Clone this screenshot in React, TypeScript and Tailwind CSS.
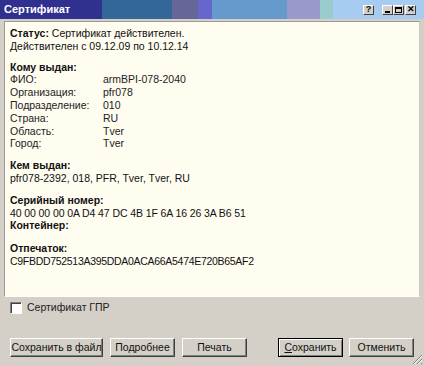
import React from 'react';

const sections = [
  {
    title: 'Кому выдан:',
    rows: [
      ['ФИО:', 'armBPI-078-2040'],
      ['Организация:', 'pfr078'],
      ['Подразделение:', '010'],
      ['Страна:', 'RU'],
      ['Область:', 'Tver'],
      ['Город:', 'Tver'],
    ],
  },
];

const TitleButton = ({ children }: { children: React.ReactNode }) => (
  <div className="w-[11px] h-[10px] bg-[#d4d0c8] border-t border-l border-t-white border-l-white border-b border-r border-b-[#404040] border-r-[#404040] flex items-center justify-center text-[9px] leading-none font-bold text-black">
    {children}
  </div>
);

const Button = ({ children, primary }: { children: React.ReactNode; primary?: boolean }) => (
  <div
    className={`h-[19px] flex items-center justify-center whitespace-nowrap bg-[#d4d0c8] text-[10.5px] text-[#111] ${
      primary
        ? 'border border-black shadow-[inset_1px_1px_0_#fff,inset_-1px_-1px_0_#808080]'
        : 'border border-t-white border-l-white border-b-[#404040] border-r-[#404040] shadow-[inset_-1px_-1px_0_#808080]'
    }`}
  >
    {children}
  </div>
);

export default function App() {
  return (
    <div className="w-[424px] h-[366px] bg-[#d4d0c8] flex flex-col font-['Liberation_Sans',Arial,sans-serif] text-[10.5px] text-black overflow-hidden relative">
      {/* title bar */}
      <div className="h-[19px] flex items-center pl-[4px] pr-[8px] bg-[linear-gradient(to_right,#30318f_0px,#30318f_102px,#336699_102px,#336699_172px,#666699_172px,#666699_198px,#6666cc_198px,#6666cc_212px,#6699cc_212px,#6699cc_287px,#9999cc_287px,#9999cc_320px,#99cccc_320px,#99cccc_333px,#a6ccf2_333px)]">
        <span className="text-white font-bold text-[11px]">Сертификат</span>
        <div className="ml-auto flex items-center">
          <TitleButton>?</TitleButton>
          <div className="w-[8px]" />
          <TitleButton>
            <span className="block w-[5px] h-[2px] bg-black mt-[5px]" />
          </TitleButton>
          <TitleButton>
            <span className="block w-[7px] h-[6px] border border-black border-t-2" />
          </TitleButton>
          <div className="w-[1px]" />
          <TitleButton>✕</TitleButton>
        </div>
      </div>

      {/* content panel */}
      <div className="mx-[4px] mt-[2px] h-[276px] bg-[#fffcf0] border-t border-l border-[#9a9a9a] border-r border-r-[#c8c8c8] border-b border-b-white px-[5px] pt-[5px] leading-[12.8px] text-[#111]">
        <div>
          <b>Статус:</b> Сертификат действителен.
        </div>
        <div>Действителен с 09.12.09 по 10.12.14</div>

        {sections.map((s) => (
          <div key={s.title} className="mt-[8px]">
            <div className="font-bold">{s.title}</div>
            {s.rows.map(([k, v]) => (
              <div key={k} className="flex text-[#222]">
                <span className="w-[93px]">{k}</span>
                <span>{v}</span>
              </div>
            ))}
          </div>
        ))}

        <div className="mt-[9px]">
          <div className="font-bold">Кем выдан:</div>
          <div>pfr078-2392, 018, PFR, Tver, Tver, RU</div>
        </div>

        <div className="mt-[9px]">
          <div className="font-bold">Серийный номер:</div>
          <div className="tracking-[-0.1px]">40 00 00 00 0A D4 47 DC 4B 1F 6A 16 26 3A B6 51</div>
          <div className="font-bold">Контейнер:</div>
        </div>

        <div className="mt-[10px]">
          <div className="font-bold">Отпечаток:</div>
          <div className="tracking-[-0.3px]">C9FBDD752513A395DDA0ACA66A5474E720B65AF2</div>
        </div>
      </div>

      {/* checkbox */}
      <div className="flex items-center mt-[5px] ml-[10px] h-[12px]">
        <div className="w-[12px] h-[12px] bg-white border border-t-[#808080] border-l-[#808080] border-b-white border-r-white shadow-[inset_1px_1px_0_#404040]" />
        <span className="ml-[5px] text-[#222]">Сертификат ГПР</span>
      </div>

      {/* buttons */}
      <div className="flex items-center mt-[24px] px-[10px]">
        <div className="w-[93px]">
          <Button>Сохранить в файл</Button>
        </div>
        <div className="w-[65px] ml-[7px]">
          <Button>Подробнее</Button>
        </div>
        <div className="w-[65px] ml-[7px]">
          <Button>Печать</Button>
        </div>
        <div className="w-[65px] ml-auto">
          <Button primary>
            <span>
              <span className="underline">С</span>охранить
            </span>
          </Button>
        </div>
        <div className="w-[65px] ml-[6px]">
          <Button>Отменить</Button>
        </div>
      </div>

      {/* resize grip */}
      <svg className="absolute right-[1px] bottom-[1px]" width="11" height="11" viewBox="0 0 11 11">
        <path d="M10 1 L1 10 M10 5 L5 10 M10 9 L9 10" stroke="#808080" strokeWidth="1" />
        <path d="M10 2 L2 10 M10 6 L6 10" stroke="#ffffff" strokeWidth="1" />
      </svg>
    </div>
  );
}
